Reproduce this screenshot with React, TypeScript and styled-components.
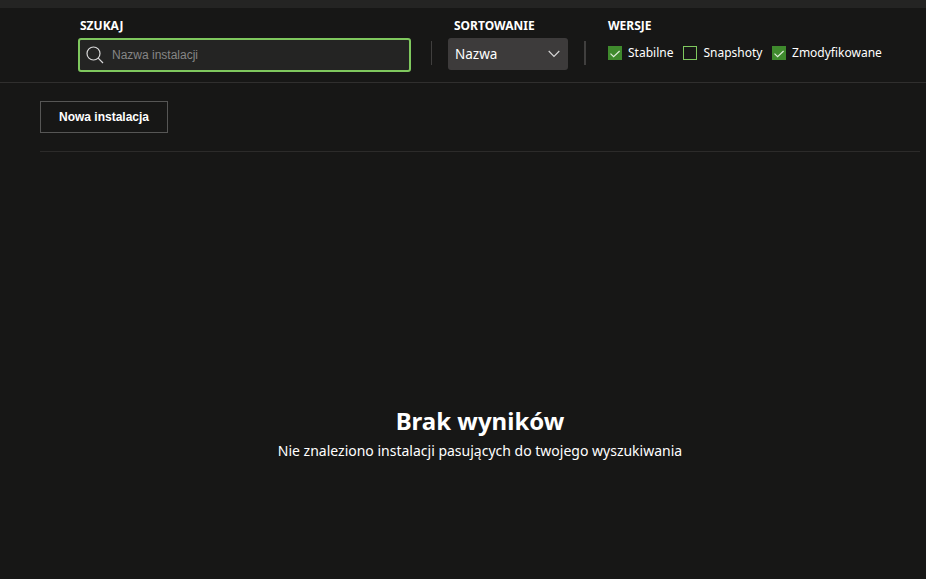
import React from "react";
import styled, { createGlobalStyle } from "styled-components";

const Global = createGlobalStyle`
  html, body { margin: 0; padding: 0; background: #171716; }
  body { font-family: "Noto Sans", sans-serif; color: #fff; }
  * { box-sizing: border-box; }
`;

const Page = styled.div`
  width: 926px;
  height: 579px;
  overflow: hidden;
  display: flex;
  flex-direction: column;
  background: #171716;
`;

const TopStrip = styled.div`
  height: 8px;
  flex: none;
  background: #242423;
`;

const FilterBar = styled.header`
  height: 75px;
  flex: none;
  display: flex;
  align-items: flex-start;
  padding: 11px 0 0 78px;
  border-bottom: 1px solid #302f2e;
`;

const Field = styled.div<{ $width: number }>`
  width: ${(p) => p.$width}px;
  flex: none;
  display: flex;
  flex-direction: column;
`;

const Label = styled.div<{ $indent?: number }>`
  height: 14px;
  margin: 0 0 5px ${(p) => p.$indent ?? 0}px;
  font-size: 12px;
  line-height: 14px;
  font-weight: 700;
  color: #fff;
`;

const SearchBox = styled.div`
  height: 34px;
  display: flex;
  align-items: center;
  padding-left: 6px;
  gap: 8px;
  background: #242423;
  border: 2px solid #7fc85e;
  border-radius: 3px;
  color: #d8d8d8;
`;

const SearchInput = styled.input`
  flex: 1;
  min-width: 0;
  border: 0;
  outline: 0;
  padding: 0;
  background: transparent;
  font: 12px "Liberation Sans", sans-serif;
  color: #fff;
  &::placeholder { color: #868686; opacity: 1; }
`;

const Divider = styled.div<{ $left: number; $right: number; $thick?: boolean }>`
  width: ${(p) => (p.$thick ? 2 : 1)}px;
  height: 24px;
  flex: none;
  margin: 22px ${(p) => p.$right}px 0 ${(p) => p.$left}px;
  background: #403f3e;
`;

const SelectBox = styled.div`
  height: 32px;
  display: flex;
  align-items: center;
  justify-content: space-between;
  padding: 0 8px 0 7px;
  background: #3d3b3b;
  border-radius: 3px;
  font-size: 13.5px;
  color: #fff;
`;

const Checks = styled.div`
  display: flex;
  align-items: center;
  height: 14px;
  margin-top: 8px;
`;

const Check = styled.div<{ $gap: number }>`
  display: flex;
  align-items: center;
  gap: 6px;
  margin-right: ${(p) => p.$gap}px;
  font-size: 12px;
  line-height: 14px;
  color: #fff;
`;

const Box = styled.span<{ $on: boolean }>`
  width: 14px;
  height: 14px;
  flex: none;
  display: flex;
  align-items: center;
  justify-content: center;
  background: ${(p) => (p.$on ? "#3f8a2d" : "transparent")};
  border: 1px solid ${(p) => (p.$on ? "#3f8a2d" : "#7fc85e")};
`;

const Content = styled.main`
  flex: 1;
  display: flex;
  flex-direction: column;
  padding: 18px 6px 0 40px;
`;

const Toolbar = styled.div`
  height: 51px;
  flex: none;
  border-bottom: 1px solid #2c2b2a;
`;

const NewButton = styled.button`
  width: 128px;
  height: 32px;
  padding: 0;
  background: transparent;
  border: 1px solid #565655;
  color: #fff;
  font: 700 12px "Liberation Sans", sans-serif;
`;

const Empty = styled.div`
  margin-top: 253px;
  display: flex;
  flex-direction: column;
  align-items: center;
`;

const EmptyTitle = styled.h2`
  margin: 0;
  font-size: 24px;
  line-height: 32px;
  font-weight: 700;
  color: #fff;
`;

const EmptyText = styled.p`
  margin: 4px 0 0;
  font-size: 14px;
  line-height: 20px;
  color: #fff;
`;

const Tick = () => (
  <svg width="12" height="12" viewBox="0 0 12 12" fill="none" stroke="#dfeeda" strokeWidth="1.2">
    <path d="M1.5 6.6 4.6 9.6 10.6 4" />
  </svg>
);

export default function App() {
  return (
    <Page>
      <Global />
      <TopStrip />
      <FilterBar>
        <Field $width={333}>
          <Label $indent={2}>SZUKAJ</Label>
          <SearchBox>
            <svg width="18" height="18" viewBox="0 0 18 18" fill="none" stroke="currentColor" strokeWidth="1.2">
              <circle cx="7.5" cy="7.5" r="6.5" />
              <path d="M12.2 12.2 17 17" />
            </svg>
            <SearchInput placeholder="Nazwa instalacji" />
          </SearchBox>
        </Field>
        <Divider $left={20} $right={16} />
        <Field $width={120}>
          <Label $indent={6}>SORTOWANIE</Label>
          <SelectBox>
            Nazwa
            <svg width="12" height="8" viewBox="0 0 12 8" fill="none" stroke="#d8d8d8" strokeWidth="1.1">
              <path d="M.7 1 6 6.5 11.3 1" />
            </svg>
          </SelectBox>
        </Field>
        <Divider $left={16} $right={22} $thick />
        <Field $width={300}>
          <Label>WERSJE</Label>
          <Checks>
            <Check $gap={10}>
              <Box $on><Tick /></Box>Stabilne
            </Check>
            <Check $gap={9.6}>
              <Box $on={false} />Snapshoty
            </Check>
            <Check $gap={0}>
              <Box $on><Tick /></Box>Zmodyfikowane
            </Check>
          </Checks>
        </Field>
      </FilterBar>
      <Content>
        <Toolbar>
          <NewButton>Nowa instalacja</NewButton>
        </Toolbar>
        <Empty>
          <EmptyTitle>Brak wyników</EmptyTitle>
          <EmptyText>Nie znaleziono instalacji pasujących do twojego wyszukiwania</EmptyText>
        </Empty>
      </Content>
    </Page>
  );
}
